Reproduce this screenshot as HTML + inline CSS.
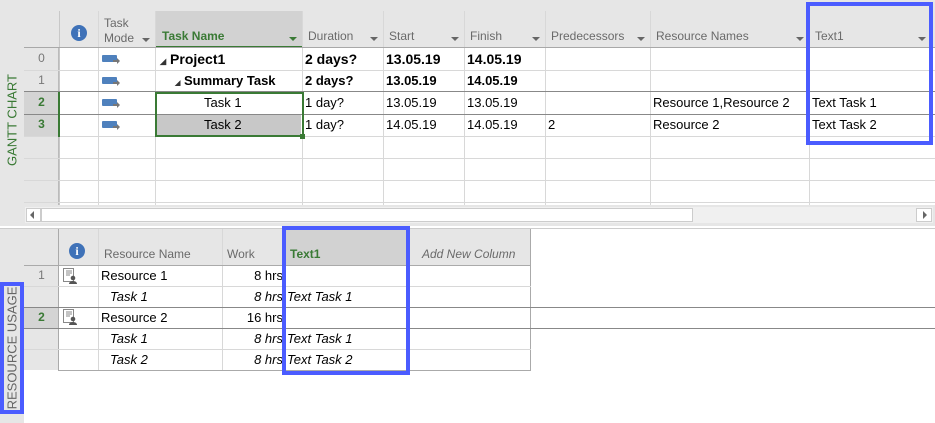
<!DOCTYPE html>
<html><head><style>
*{margin:0;padding:0;box-sizing:border-box}
body{width:935px;height:423px;position:relative;overflow:hidden;background:#fff;font-family:"Liberation Sans",sans-serif;font-size:13px;color:#000}
.a{position:absolute}
.hl{position:absolute;height:1px;background:#d8d8d8}
.vl{position:absolute;width:1px;background:#d8d8d8}
.t{position:absolute;white-space:nowrap;line-height:22px}
.h{position:absolute;color:#6a6a6a;font-size:12px;white-space:nowrap}
.dd{position:absolute;width:0;height:0;border-left:4px solid transparent;border-right:4px solid transparent;border-top:4px solid #666}
.num{position:absolute;width:35px;text-align:center;color:#777;font-size:12px;line-height:22px}
.mode{position:absolute;width:15px;height:7px;background:#4f81bd;border-radius:1px}
.mode:after{content:"";position:absolute;left:11px;top:5px;width:6px;height:2px;background:#777}
.mode:before{content:"";position:absolute;left:15px;top:3px;border-top:3px solid transparent;border-bottom:3px solid transparent;border-left:3px solid #777;margin-top:0;top:3px}
.blue{position:absolute;border:4px solid #4b5cff}
.info{position:absolute;width:16px;height:16px;border-radius:50%;background:#3f72b8;color:#fff;font-weight:bold;font-size:12px;text-align:center;line-height:16px;font-family:"Liberation Serif",serif}
.b{font-weight:bold}
.i{font-style:italic}
</style></head><body>
<div class="a" style="left:0;top:0;width:935px;height:226px;background:#e6e6e6"></div>
<div class="a" style="left:59px;top:48px;width:876px;height:157px;background:#fff"></div>
<div class="a" style="left:24px;top:92px;width:35px;height:44px;background:#d4d4d4"></div>
<div class="a" style="left:24px;top:48px;width:35px;height:157px;border-right:1px solid #bbb"></div>
<div class="vl" style="left:59px;top:11px;height:194px;background:#c8c8c8"></div>
<div class="vl" style="left:98px;top:11px;height:194px"></div>
<div class="vl" style="left:155px;top:11px;height:194px"></div>
<div class="vl" style="left:302px;top:11px;height:194px"></div>
<div class="vl" style="left:383px;top:11px;height:194px"></div>
<div class="vl" style="left:464px;top:11px;height:194px"></div>
<div class="vl" style="left:545px;top:11px;height:194px"></div>
<div class="vl" style="left:650px;top:11px;height:194px"></div>
<div class="vl" style="left:809px;top:11px;height:194px"></div>
<div class="a" style="left:156px;top:11px;width:146px;height:37px;background:#d2d2d2;border-bottom:2px solid #3a7a35"></div>
<div class="hl" style="left:24px;top:47px;width:911px;background:#a8a8a8"></div>
<div class="hl" style="left:24px;top:70px;width:911px"></div>
<div class="hl" style="left:24px;top:91px;width:911px;background:#888"></div>
<div class="hl" style="left:24px;top:114px;width:911px;background:#888"></div>
<div class="hl" style="left:24px;top:136px;width:911px"></div>
<div class="hl" style="left:24px;top:158px;width:911px"></div>
<div class="hl" style="left:24px;top:180px;width:911px"></div>
<div class="hl" style="left:24px;top:202px;width:911px"></div>
<div class="a" style="left:58px;top:92px;width:2px;height:45px;background:#3a7a35"></div>
<div class="a" style="left:157px;top:115px;width:144px;height:21px;background:#c8c8c8"></div>
<div class="a" style="left:155px;top:92px;width:149px;height:45px;border:2px solid #3a7a35"></div>
<div class="a" style="left:300px;top:134px;width:5px;height:5px;background:#3a7a35"></div>
<div class="info" style="left:71px;top:25px">i</div>
<div class="h" style="left:104px;top:16px;line-height:15px">Task<br>Mode</div>
<div class="dd" style="left:142px;top:38px"></div>
<div class="h b" style="left:162px;top:29px;color:#3a7a35;font-size:12px">Task Name</div>
<div class="dd" style="left:289px;top:37px;border-top-color:#3a7a35"></div>
<div class="h" style="left:308px;top:29px">Duration</div><div class="dd" style="left:370px;top:37px"></div>
<div class="h" style="left:389px;top:29px">Start</div><div class="dd" style="left:451px;top:37px"></div>
<div class="h" style="left:470px;top:29px">Finish</div><div class="dd" style="left:532px;top:37px"></div>
<div class="h" style="left:551px;top:29px">Predecessors</div><div class="dd" style="left:637px;top:37px"></div>
<div class="h" style="left:656px;top:29px">Resource Names</div><div class="dd" style="left:796px;top:37px"></div>
<div class="h" style="left:815px;top:29px">Text1</div><div class="dd" style="left:918px;top:37px"></div>
<div class="num" style="left:24px;top:47px">0</div>
<div class="num" style="left:24px;top:69px">1</div>
<div class="num b" style="left:24px;top:91px;color:#3a7a35">2</div>
<div class="num b" style="left:24px;top:113px;color:#3a7a35">3</div>
<div class="mode" style="left:102px;top:55px"></div>
<div class="mode" style="left:102px;top:77px"></div>
<div class="mode" style="left:102px;top:99px"></div>
<div class="mode" style="left:102px;top:121px"></div>
<div class="t b" style="left:160px;top:48px;font-size:14px"><span style="font-size:8px;color:#333">◢</span> Project1</div>
<div class="t b" style="left:175px;top:70px"><span style="font-size:7px;color:#333">◢</span> Summary Task</div>
<div class="t" style="left:204px;top:92px">Task 1</div>
<div class="t" style="left:204px;top:114px">Task 2</div>
<div class="t b" style="left:305px;top:48px;font-size:14px">2 days?</div>
<div class="t b" style="left:305px;top:70px">2 days?</div>
<div class="t" style="left:305px;top:92px">1 day?</div>
<div class="t" style="left:305px;top:114px">1 day?</div>
<div class="t b" style="left:386px;top:48px;font-size:14px">13.05.19</div>
<div class="t b" style="left:386px;top:70px">13.05.19</div>
<div class="t" style="left:386px;top:92px">13.05.19</div>
<div class="t" style="left:386px;top:114px">14.05.19</div>
<div class="t b" style="left:467px;top:48px;font-size:14px">14.05.19</div>
<div class="t b" style="left:467px;top:70px">14.05.19</div>
<div class="t" style="left:467px;top:92px">13.05.19</div>
<div class="t" style="left:467px;top:114px">14.05.19</div>
<div class="t" style="left:548px;top:114px">2</div>
<div class="t" style="left:653px;top:92px">Resource 1,Resource 2</div>
<div class="t" style="left:653px;top:114px">Resource 2</div>
<div class="t" style="left:812px;top:92px">Text Task 1</div>
<div class="t" style="left:812px;top:114px">Text Task 2</div>
<div class="a" style="left:25px;top:207px;width:908px;height:16px;background:#f0f0f0"></div>
<div class="a" style="left:26px;top:208px;width:15px;height:14px;background:#fff;border:1px solid #ccc"></div>
<div class="a" style="left:30px;top:211px;width:0;height:0;border-top:4px solid transparent;border-bottom:4px solid transparent;border-right:4px solid #666"></div>
<div class="a" style="left:41px;top:208px;width:652px;height:14px;background:#fff;border:1px solid #ccc"></div>
<div class="a" style="left:916px;top:208px;width:16px;height:14px;background:#fff;border:1px solid #ccc"></div>
<div class="a" style="left:923px;top:211px;width:0;height:0;border-top:4px solid transparent;border-bottom:4px solid transparent;border-left:4px solid #666"></div>
<div class="hl" style="left:0;top:228px;width:935px;background:#ccc"></div>
<div class="a" style="left:12px;top:120px;transform:translate(-50%,-50%) rotate(-90deg);color:#3a7a35;font-size:13px;white-space:nowrap">GANTT CHART</div>

<div class="a" style="left:0;top:229px;width:531px;height:36px;background:#e6e6e6"></div>
<div class="a" style="left:0;top:229px;width:24px;height:194px;background:#e6e6e6"></div>
<div class="a" style="left:24px;top:265px;width:34px;height:105px;background:#e6e6e6"></div>
<div class="a" style="left:24px;top:307px;width:34px;height:21px;background:#d4d4d4"></div>
<div class="a" style="left:283px;top:229px;width:124px;height:36px;background:#d2d2d2"></div>
<div class="vl" style="left:58px;top:229px;height:141px;background:#aaa"></div>
<div class="vl" style="left:98px;top:229px;height:141px"></div>
<div class="vl" style="left:222px;top:229px;height:141px"></div>
<div class="vl" style="left:283px;top:229px;height:141px"></div>
<div class="vl" style="left:407px;top:229px;height:141px"></div>
<div class="vl" style="left:530px;top:229px;height:141px;background:#aaa"></div>
<div class="hl" style="left:24px;top:265px;width:507px;background:#aaa"></div>
<div class="hl" style="left:24px;top:286px;width:507px"></div>
<div class="hl" style="left:24px;top:307px;width:911px;background:#888"></div>
<div class="hl" style="left:24px;top:328px;width:911px;background:#888"></div>
<div class="hl" style="left:24px;top:349px;width:507px"></div>
<div class="hl" style="left:58px;top:370px;width:473px;background:#aaa"></div>
<div class="info" style="left:69px;top:243px">i</div>
<div class="h" style="left:104px;top:247px">Resource Name</div>
<div class="h" style="left:227px;top:247px">Work</div>
<div class="h b" style="left:290px;top:247px;color:#3a7a35">Text1</div>
<div class="h i" style="left:422px;top:247px">Add New Column</div>
<div class="num" style="left:24px;top:264px">1</div>
<div class="num b" style="left:24px;top:306px;color:#3a7a35">2</div>
<svg class="a" style="left:62px;top:268px" width="16" height="16"><rect x="1.5" y="0.5" width="10" height="13" fill="#fff" stroke="#888"/><path d="M4 3h6M4 5h6M4 7h4" stroke="#888"/><circle cx="11" cy="10" r="2.3" fill="#555"/><path d="M7 16c0-4 8-4 8 0z" fill="#555"/></svg>
<svg class="a" style="left:62px;top:309px" width="16" height="16"><rect x="1.5" y="0.5" width="10" height="13" fill="#fff" stroke="#888"/><path d="M4 3h6M4 5h6M4 7h4" stroke="#888"/><circle cx="11" cy="10" r="2.3" fill="#555"/><path d="M7 16c0-4 8-4 8 0z" fill="#555"/></svg>
<div class="t" style="left:101px;top:265px;line-height:21px">Resource 1</div>
<div class="t i" style="left:110px;top:286px;line-height:21px">Task 1</div>
<div class="t" style="left:101px;top:307px;line-height:21px">Resource 2</div>
<div class="t i" style="left:110px;top:328px;line-height:21px">Task 1</div>
<div class="t i" style="left:110px;top:349px;line-height:21px">Task 2</div>
<div class="t" style="left:222px;top:265px;width:61px;text-align:right;line-height:21px">8 hrs</div>
<div class="t i" style="left:222px;top:286px;width:61px;text-align:right;line-height:21px">8 hrs</div>
<div class="t" style="left:222px;top:307px;width:61px;text-align:right;line-height:21px">16 hrs</div>
<div class="t i" style="left:222px;top:328px;width:61px;text-align:right;line-height:21px">8 hrs</div>
<div class="t i" style="left:222px;top:349px;width:61px;text-align:right;line-height:21px">8 hrs</div>
<div class="t i" style="left:287px;top:286px;line-height:21px">Text Task 1</div>
<div class="t i" style="left:287px;top:328px;line-height:21px">Text Task 1</div>
<div class="t i" style="left:287px;top:349px;line-height:21px">Text Task 2</div>
<div class="a" style="left:12px;top:348px;transform:translate(-50%,-50%) rotate(-90deg);color:#666;font-size:13px;white-space:nowrap">RESOURCE USAGE</div>

<div class="blue" style="left:806px;top:2px;width:127px;height:143px"></div>
<div class="blue" style="left:282px;top:226px;width:128px;height:149px"></div>
<div class="blue" style="left:0;top:282px;width:24px;height:132px"></div>
</body></html>
